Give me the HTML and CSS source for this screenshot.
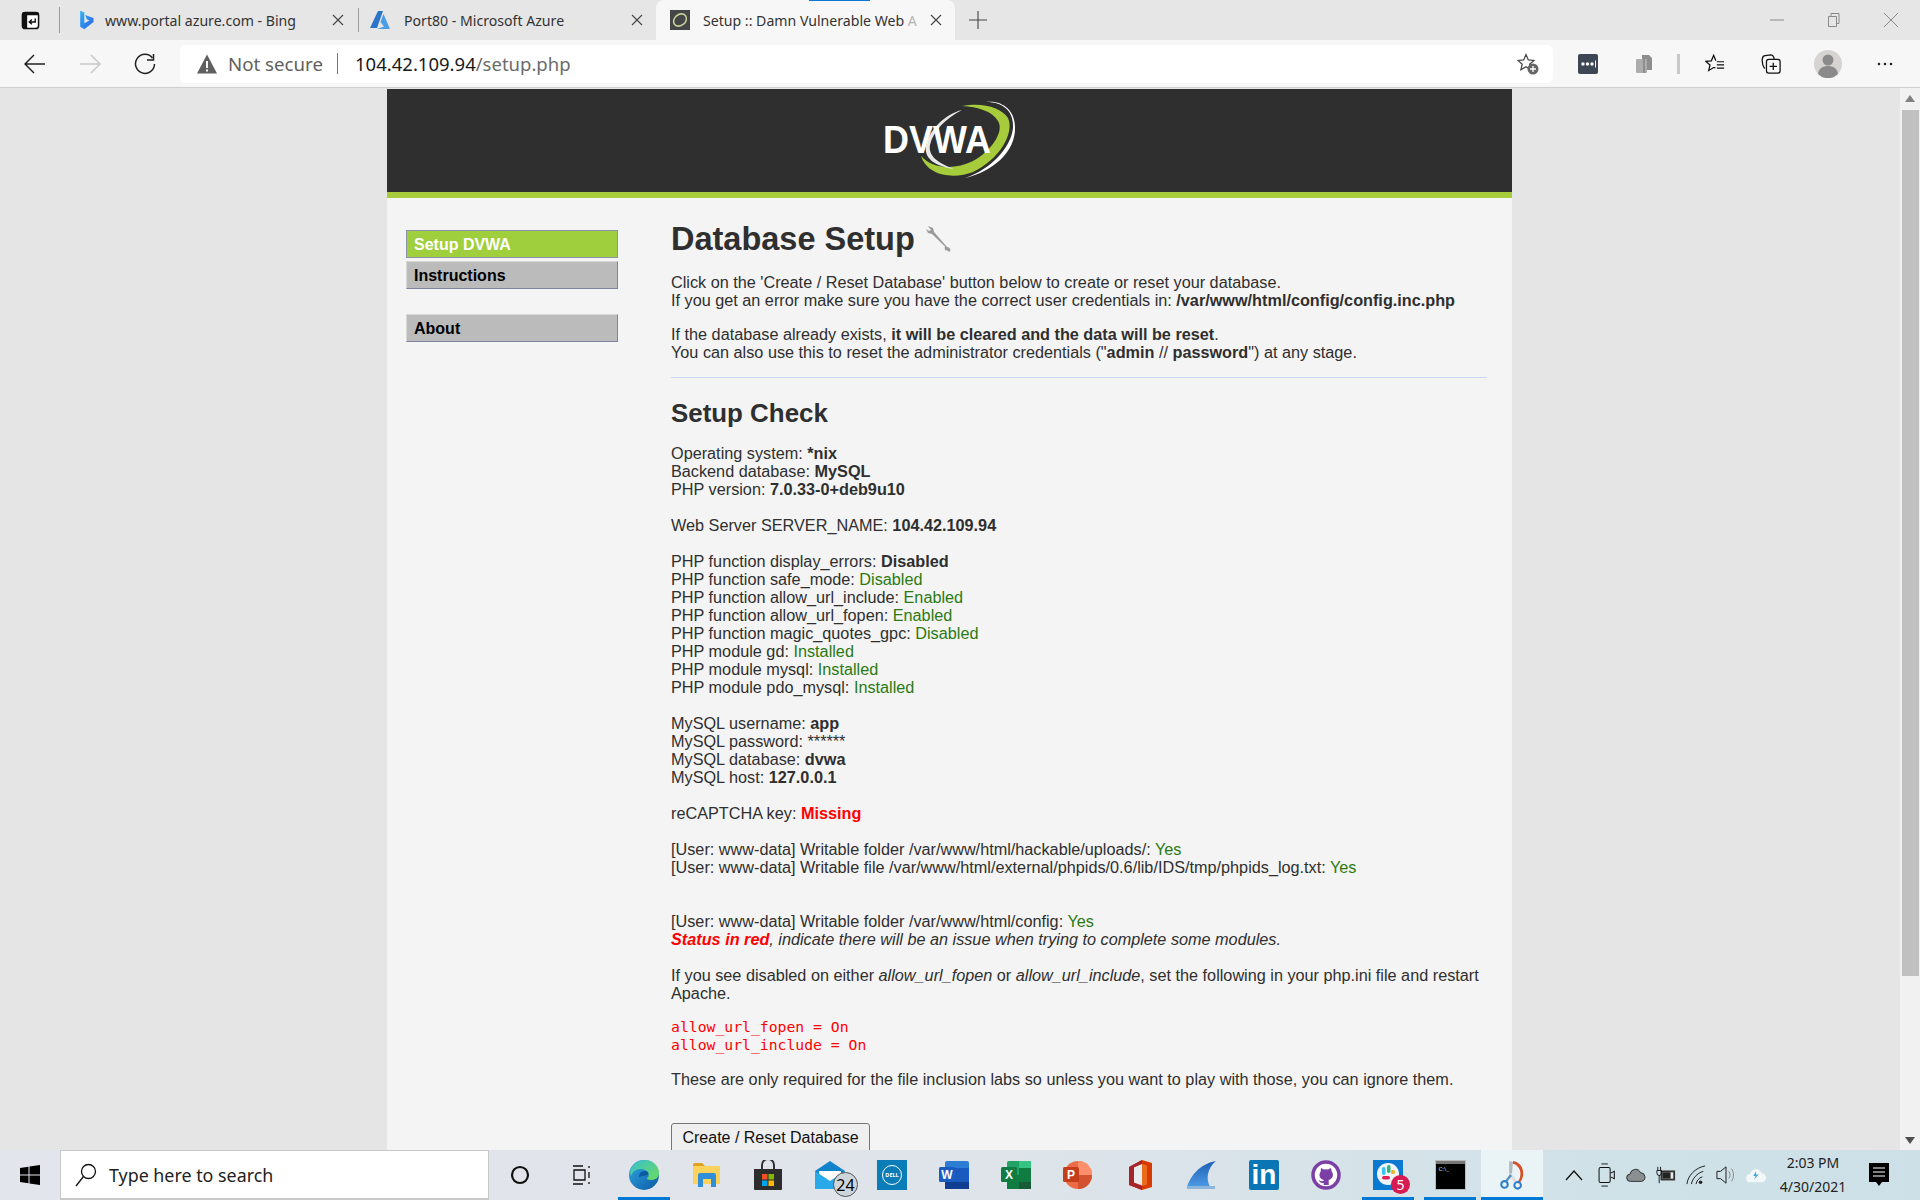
FILE: index.html
```html
<!DOCTYPE html>
<html lang="en">
<head>
<meta charset="utf-8">
<title>Setup :: Damn Vulnerable Web Application</title>
<link rel="stylesheet" href="styles.css">
</head>
<body>
<div class="tabstrip">
  <div class="tab-actions">
    <svg class="ic20" viewBox="0 0 20 20"><rect x="1.5" y="1.5" width="17" height="17" rx="3" fill="#fff" stroke="#111" stroke-width="1.6"/><path d="M1.5 4.5a3 3 0 0 1 3-3h2v17h-2a3 3 0 0 1-3-3z" fill="#111"/><path d="M1.5 1.5h17v3h-17z" fill="#111"/><path d="M15 8v3.5h-6M11.5 9l-2.8 2.5 2.8 2.5" fill="none" stroke="#111" stroke-width="1.5"/></svg>
  </div>
  <div class="tab">
    <svg class="fav" viewBox="0 0 20 24"><defs><linearGradient id="bing" x1="0" y1="0" x2="1" y2="1"><stop offset="0" stop-color="#36b4f0"/><stop offset="1" stop-color="#2a62e8"/></linearGradient></defs><path d="M3 1l5 2v13l6-3.5-3-1.5-2-5 10 3.500v5L8 23l-5-3z" fill="url(#bing)"/></svg>
    <span class="tab-title tab-title-first">www.portal azure.com - Bing</span>
    <svg class="close" viewBox="0 0 12 12"><path d="M1 1l10 10M11 1L1 11"/></svg>
  </div>
  <div class="tab tab-sep">
    <svg class="fav" viewBox="0 0 20 20"><path d="M8 1h5L7 18H0z" fill="#2c74c8"/><path d="M13.500 4L20 19H7l7-2.500-3.500-4.500z" fill="#4a9ce4"/></svg>
    <span class="tab-title">Port80 - Microsoft Azure</span>
    <svg class="close" viewBox="0 0 12 12"><path d="M1 1l10 10M11 1L1 11"/></svg>
  </div>
  <div class="tab tab-active">
    <svg class="fav" viewBox="0 0 20 20"><rect width="20" height="20" fill="#434547"/><ellipse cx="10" cy="10" rx="7" ry="5.500" transform="rotate(-40 10 10)" fill="none" stroke="#c4cf98" stroke-width="1.600"/></svg>
    <span class="tab-title tab-title-active">Setup :: Damn Vulnerable Web <span class="tab-fade">A</span></span>
    <svg class="close" viewBox="0 0 12 12"><path d="M1 1l10 10M11 1L1 11"/></svg>
  </div>
  <svg class="plus" viewBox="0 0 18 18"><path d="M9 0v18M0 9h18"/></svg>
  <div class="win-controls">
    <svg class="win" viewBox="0 0 14 14"><path d="M0 7h14"/></svg>
    <svg class="win" viewBox="0 0 14 14"><path d="M1.500 3.500h8v10h-8zM4 3.500V.5h8v10h-2.500"/></svg>
    <svg class="win" viewBox="0 0 14 14"><path d="M0 0l14 14M14 0L0 14"/></svg>
  </div>
</div>

<div class="toolbar">
  <div class="nav">
    <svg viewBox="0 0 22 22"><path d="M21 11H2M10 2l-9 9 9 9" fill="none" stroke="#222" stroke-width="1.500"/></svg>
  </div>
  <div class="nav">
    <svg viewBox="0 0 22 22"><path d="M1 11h19M12 2l9 9-9 9" fill="none" stroke="#c8c8c8" stroke-width="1.500"/></svg>
  </div>
  <div class="nav">
    <svg viewBox="0 0 22 22"><path d="M18.500 5A9.500 9.500 0 1 0 20.500 11" fill="none" stroke="#222" stroke-width="1.500"/><path d="M13 7h6.500V1" fill="none" stroke="#222" stroke-width="1.500"/></svg>
  </div>
  <div class="address">
    <svg class="warn" viewBox="0 0 20 20"><path d="M10 .5L20 19.500H0z" fill="#5f5f5f"/><path d="M9 7h2v7H9zM9 15.500h2v2H9z" fill="#f7f7f7"/></svg>
    <span class="not-secure">Not secure</span>
    <span class="addr-sep"></span>
    <span class="url"><span class="url-host">104.42.109.94</span>/setup.php</span>
    <svg class="star-add" viewBox="0 0 22 22"><path d="M9 1.500l2.300 5.400 5.700.5-4.400 3.800 1.300 5.600-5-3-5 3 1.300-5.600L1 7.400l5.700-.5z" fill="none" stroke="#444" stroke-width="1.200"/><circle cx="16" cy="16" r="5.500" fill="#666"/><path d="M16 13v6M13 16h6" stroke="#fff" stroke-width="1.300"/></svg>
  </div>
  <div class="tool"><svg viewBox="0 0 20 20"><rect width="20" height="20" rx="2" fill="#3d4654"/><circle cx="5" cy="10" r="1.700" fill="#fff"/><circle cx="9.500" cy="10" r="1.700" fill="#fff"/><circle cx="14" cy="10" r="1.700" fill="#fff"/><path d="M17.500 6.500v7" stroke="#fff"/></svg></div>
  <div class="tool"><svg viewBox="0 0 20 20"><path d="M8 1h7l3 3v12h-5v-5L8 6z" fill="#8e8e8e"/><rect x="2" y="5" width="11" height="14" rx="1" fill="#adadad"/><path d="M10 5v14" stroke="#8e8e8e" stroke-width="2"/></svg></div>
  <span class="tool-sep"></span>
  <div class="tool"><svg viewBox="0 0 22 22"><path d="M12 7.500L9.500 1.500 7 7.500l-6 .6 4.500 4-1.400 6 5.400-3.200h2" fill="none" stroke="#111" stroke-width="1.400"/><path d="M13 8.500h8M13 12h8M13 15.500h8" stroke="#111" stroke-width="1.300"/></svg></div>
  <div class="tool"><svg viewBox="0 0 22 22"><path d="M4 16C2 13 1 8 1.500 5c.2-1.500 1.500-3 3-3.200L11 1c1.500 0 2.500 1 3 2.500l.5 2" fill="none" stroke="#111" stroke-width="1.400"/><rect x="6" y="6" width="15" height="15" rx="2.500" fill="#f7f7f7" stroke="#111" stroke-width="1.400"/><path d="M13.500 9.500v8M9.500 13.500h8" stroke="#111" stroke-width="1.400"/></svg></div>
  <div class="tool"><svg class="avatar" viewBox="0 0 28 28"><circle cx="14" cy="14" r="14" fill="#d6d4d0"/><circle cx="14" cy="10" r="5.500" fill="#8a8a8a"/><path d="M4 24c1-6 5-8 10-8s9 2 10 8a14 14 0 0 1-20 0z" fill="#8a8a8a"/></svg></div>
  <div class="tool"><svg class="dots" viewBox="0 0 16 4"><circle cx="2" cy="2" r="1.300" fill="#222"/><circle cx="8" cy="2" r="1.300" fill="#222"/><circle cx="14" cy="2" r="1.300" fill="#222"/></svg></div>
</div>

<div class="viewport">
  <div class="page">
    <div class="wrapper">
      <header class="site-header">
        <svg class="logo" viewBox="0 0 160 100">
          <path d="M116 12C134 12 144 22 143 38C141 57 122 79 95 88C122 82 146 62 145 37C145 21 133 10 116 12Z" fill="#fff"/>
          <path d="M92 16C112 12 131 17 138 28C145 43 129 70 103 82C85 89 58 87 51 66C62 79 85 80 103 71C120 62 135 42 128 31C122 21 108 17 92 16Z" fill="#a6cc3c"/>
          <path d="M92 20C76 24 60 38 56 56C54 68 64 76 84 79C68 73 58 66 60 55C63 41 76 28 92 20Z" fill="#e8e8e8"/>
          <text class="logo-text" x="13" y="63" textLength="108" lengthAdjust="spacingAndGlyphs">DVWA</text>
        </svg>
      </header>
      <div class="content">
        <nav class="sidebar">
          <ul class="menu">
            <li class="menu-item menu-item-active">Setup DVWA</li>
            <li class="menu-item">Instructions</li>
          </ul>
          <ul class="menu">
            <li class="menu-item">About</li>
          </ul>
        </nav>
        <main class="main">
          <h1 class="title">Database Setup
            <svg class="wrench" viewBox="0 0 26 28"><path d="M2 1l5 2 1 4 13 15c1.500 0 3 1 3.500 3l-1 2-3-2-1 .5c-1-1.500-1-3-.5-4L6 9 2 8 0 4l3 2 2-1z" fill="#9a9a9a"/></svg>
          </h1>
          <p>Click on the 'Create / Reset Database' button below to create or reset your database.<br>If you get an error make sure you have the correct user credentials in: <b>/var/www/html/config/config.inc.php</b></p>
          <p>If the database already exists, <b>it will be cleared and the data will be reset</b>.<br>You can also use this to reset the administrator credentials ("<b>admin</b> // <b>password</b>") at any stage.</p>
          <hr class="rule">
          <h2 class="subtitle">Setup Check</h2>
          <div class="checks">
            Operating system: <b>*nix</b><br>
            Backend database: <b>MySQL</b><br>
            PHP version: <b>7.0.33-0+deb9u10</b><br><br>
            Web Server SERVER_NAME: <b>104.42.109.94</b><br><br>
            PHP function display_errors: <b>Disabled</b><br>
            PHP function safe_mode: <span class="ok">Disabled</span><br>
            PHP function allow_url_include: <span class="ok">Enabled</span><br>
            PHP function allow_url_fopen: <span class="ok">Enabled</span><br>
            PHP function magic_quotes_gpc: <span class="ok">Disabled</span><br>
            PHP module gd: <span class="ok">Installed</span><br>
            PHP module mysql: <span class="ok">Installed</span><br>
            PHP module pdo_mysql: <span class="ok">Installed</span><br><br>
            MySQL username: <b>app</b><br>
            MySQL password: ******<br>
            MySQL database: <b>dvwa</b><br>
            MySQL host: <b>127.0.0.1</b><br><br>
            reCAPTCHA key: <b class="bad">Missing</b><br><br>
            [User: www-data] Writable folder /var/www/html/hackable/uploads/: <span class="ok">Yes</span><br>
            [User: www-data] Writable file /var/www/html/external/phpids/0.6/lib/IDS/tmp/phpids_log.txt: <span class="ok">Yes</span><br><br><br>
            [User: www-data] Writable folder /var/www/html/config: <span class="ok">Yes</span><br>
            <i><b class="bad">Status in red</b>, indicate there will be an issue when trying to complete some modules.</i><br><br>
            If you see disabled on either <i>allow_url_fopen</i> or <i>allow_url_include</i>, set the following in your php.ini file and restart Apache.
          </div>
          <pre class="code">allow_url_fopen = On
allow_url_include = On</pre>
          <p class="note">These are only required for the file inclusion labs so unless you want to play with those, you can ignore them.</p>
          <button class="submit" type="button">Create / Reset Database</button>
        </main>
      </div>
    </div>
  </div>
  <div class="scrollbar">
    <span class="arrow-up"></span>
    <span class="thumb"></span>
    <span class="arrow-down"></span>
  </div>
</div>

<div class="taskbar">
  <div class="start"><svg viewBox="0 0 20 20"><path d="M0 3l8.500-1.200v7.700H0zM9.500 1.600L20 0v9.500H9.500zM0 10.500h8.500v7.700L0 17zM9.500 10.500H20V20L9.500 18.400z" fill="#000"/></svg></div>
  <div class="search">
    <svg class="search-ic" viewBox="0 0 22 24"><circle cx="13.500" cy="8.500" r="7" fill="none" stroke="#111" stroke-width="1.300"/><path d="M8.500 13.500L1 23" stroke="#111" stroke-width="1.300"/></svg>
    <span class="search-text">Type here to search</span>
  </div>
  <div class="slot"><svg class="i20" viewBox="0 0 20 20"><circle cx="10" cy="10" r="8" fill="none" stroke="#111" stroke-width="2.200"/></svg></div>
  <div class="slot"><svg class="i20" viewBox="0 0 20 20"><path d="M1 1h10M1 19h10M2 5h11v10H2zM17 1v2M17 7v6M17 17v2" fill="none" stroke="#111" stroke-width="1.300"/></svg></div>
  <div class="slot slot-on">
    <svg class="i30" viewBox="0 0 30 30"><defs><linearGradient id="edge1" x1="0" y1="0" x2="1" y2="1"><stop offset="0" stop-color="#2fa8e0"/><stop offset="1" stop-color="#0c59a4"/></linearGradient><linearGradient id="edge2" x1="0" y1="0" x2="1" y2="1"><stop offset="0" stop-color="#36c1d0"/><stop offset="1" stop-color="#6fdb5c"/></linearGradient></defs><circle cx="15" cy="15" r="15" fill="url(#edge1)"/><path d="M2 9C5 3 10 0 16 0c8 0 14 6 14 13 0 5-4 7-8 7-3 0-4-1-4-2 2-1 2-3 1-5-2-4-8-5-12-3-2 1-4 3-5 6-1-3-1-5 0-7z" fill="url(#edge2)"/><path d="M10 17c0-4 3-6 6-6 3 0 4 2 3 4-1 0-9 2-9 2z" fill="#0c59a4"/></svg>
  </div>
  <div class="slot">
    <svg class="i30" viewBox="0 0 30 30"><path d="M2 5a2 2 0 0 1 2-2h7l3 3H2z" fill="#e0a11e"/><rect x="2" y="6" width="27" height="18" fill="#fbd35c"/><path d="M7 27V15a2 2 0 0 1 2-2h14a2 2 0 0 1 2 2v12h-5v-8h-8v8z" fill="#2f8fd8"/></svg>
  </div>
  <div class="slot">
    <svg class="i30" viewBox="0 0 30 30"><path d="M9 9V5a6 6 0 0 1 12 0v4" fill="none" stroke="#333" stroke-width="2"/><path d="M1 9h28v20a1 1 0 0 1-1 1H2a1 1 0 0 1-1-1z" fill="#2d2d2d"/><rect x="9" y="14" width="5.500" height="5.500" fill="#f25022"/><rect x="15.500" y="14" width="5.500" height="5.500" fill="#7fba00"/><rect x="9" y="20.500" width="5.500" height="5.500" fill="#00a4ef"/><rect x="15.500" y="20.500" width="5.500" height="5.500" fill="#ffb900"/></svg>
  </div>
  <div class="slot slot-badged">
    <svg class="i30" viewBox="0 0 30 30"><path d="M0 11L15 1l15 10v18H0z" fill="#1083cc"/><path d="M4 11h22v7l-11 7-11-7z" fill="#fff"/><path d="M0 11l15 10 15-10v18H0z" fill="#29a8ea"/></svg>
    <span class="badge badge-gray">24</span>
  </div>
  <div class="slot"><div class="dell"><span class="dell-ring">DELL</span></div></div>
  <div class="slot"><svg class="i30" viewBox="0 0 30 30"><rect x="6" y="1" width="24" height="28" rx="2" fill="#2b7cd3"/><rect x="6" y="8" width="24" height="7" fill="#185abd"/><rect x="6" y="15" width="24" height="7" fill="#185abd"/><rect x="6" y="22" width="24" height="7" fill="#103f91"/><rect y="7" width="16" height="15" rx="1.500" fill="#1a5cc0"/><text class="tile-letter" x="8" y="19">W</text></svg></div>
  <div class="slot"><svg class="i30" viewBox="0 0 30 30"><rect x="6" y="1" width="24" height="28" rx="2" fill="#21a366"/><rect x="18" y="1" width="12" height="7" fill="#33c481"/><rect x="6" y="8" width="12" height="7" fill="#21a366"/><rect x="18" y="8" width="12" height="14" fill="#107c41"/><rect x="6" y="15" width="12" height="14" fill="#107c41"/><rect x="18" y="22" width="12" height="7" fill="#185c37"/><rect y="7" width="16" height="15" rx="1.500" fill="#107c41"/><text class="tile-letter" x="8" y="19">X</text></svg></div>
  <div class="slot"><svg class="i30" viewBox="0 0 30 30"><circle cx="15" cy="15" r="14" fill="#ed6c47"/><path d="M15 1a14 14 0 0 1 14 14H15z" fill="#ff8f6b"/><path d="M15 15h14a14 14 0 0 1-14 14z" fill="#d35230"/><rect y="7" width="16" height="15" rx="1.500" fill="#c43e1c"/><text class="tile-letter" x="8" y="19">P</text></svg></div>
  <div class="slot"><svg class="i30-narrow" viewBox="0 0 24 30"><path d="M14 0L24 3v24l-10 3L1 25V7z" fill="#d83b01"/><path d="M14 0v4L6 7.500v15l8 3V30L1 25V7z" fill="#a4262c"/><path d="M14 4L6 7.500v15l8 3z" fill="#e6ecee"/><path d="M14 4l5 1.500v19L14 26z" fill="#eb6c1c"/></svg></div>
  <div class="slot"><svg class="i30" viewBox="0 0 30 30"><defs><linearGradient id="shark" x1="0" y1="0" x2="0" y2="1"><stop offset="0" stop-color="#1c5fb4"/><stop offset="1" stop-color="#4d9be6"/></linearGradient></defs><path d="M29 1c-4 3-7 8-8 13-1 4 0 9 2 13H0C3 17 12 4 29 1z" fill="url(#shark)"/><rect y="26" width="28" height="3" fill="#8cb6de"/></svg></div>
  <div class="slot"><div class="linkedin">in</div></div>
  <div class="slot"><svg class="i30" viewBox="0 0 30 30"><circle cx="15" cy="15" r="13" fill="#fff" stroke="#7b3fa6" stroke-width="3.500"/><path d="M10 8l3 1.500a8 8 0 0 1 4 0L20 8l.7 3.500c2 2.500 1.500 6-1 7.500-1 .6-1.700.8-2 1v5h-5v-2c-3 .5-4-1-5-3 1 .5 2 1.500 5 1v-1c-4-1-5.500-5-3-8.500z" fill="#7b3fa6"/></svg></div>
  <div class="slot slot-on slot-badged">
    <svg class="i30" viewBox="0 0 30 30"><rect width="30" height="30" fill="#0a79d1"/><circle cx="15" cy="14" r="11" fill="#f1f4f6"/><rect x="9" y="7" width="3.500" height="8" rx="1.700" fill="#36c5f0"/><rect x="14" y="5" width="3.500" height="8" rx="1.700" fill="#2eb67d"/><rect x="9" y="16" width="8" height="3.500" rx="1.700" fill="#e01e5a"/><rect x="18" y="10" width="4" height="4" rx="1.500" fill="#ecb22e"/></svg>
    <span class="badge badge-red">5</span>
  </div>
  <div class="slot slot-on"><div class="terminal"><span class="terminal-text">C:\_</span></div></div>
  <div class="slot slot-on slot-active">
    <svg class="i30" viewBox="0 0 26 32"><path d="M14 1c7 1 11 7 11 13 0 5-2 9-5 11l-1-2c2-2 3-5 3-9 0-4-3-9-8-10z" fill="#d4522a"/><path d="M10 1l4 1-1 12-3 1z" fill="#b0b8c0"/><path d="M12 14l6 8-3 1-5-7z" fill="#d8dde2"/><path d="M11 15L5 23l2 1 6-7z" fill="#5a8fc0"/><circle cx="5" cy="26" r="3.500" fill="none" stroke="#2f7fc8" stroke-width="2.200"/><circle cx="19" cy="27" r="3.500" fill="none" stroke="#2f7fc8" stroke-width="2.200"/></svg>
  </div>
  <div class="tray">
    <svg class="tr tr-chev" viewBox="0 0 18 12"><path d="M1 11L9 2l8 9" fill="none" stroke="#111" stroke-width="1.300"/></svg>
    <svg class="tr" viewBox="0 0 20 26"><path d="M4 5h9a1.500 1.500 0 0 1 1.500 1.500v13A1.500 1.500 0 0 1 13 21H4a1.500 1.500 0 0 1-1.500-1.500v-13A1.500 1.500 0 0 1 4 5z" fill="none" stroke="#111" stroke-width="1.100"/><path d="M15 11l4-2v8l-4-2" fill="none" stroke="#111" stroke-width="1.100"/><path d="M5 1h7M5 25h7" stroke="#111"/></svg>
    <svg class="tr" viewBox="0 0 22 18"><path d="M5 16a4 4 0 0 1-.5-8A6 6 0 0 1 16 6.500a4.800 4.800 0 0 1 1 9.500z" fill="#8a8f92" stroke="#222"/></svg>
    <svg class="tr" viewBox="0 0 22 20"><rect x="5" y="5" width="16" height="11" fill="#333"/><rect x="7" y="7" width="12" height="7" fill="#e4e8ea"/><rect x="7" y="7" width="9" height="7" fill="#222"/><path d="M2 1v4M5 1v4M1 5h5v3a2.500 2.500 0 0 1-5 0zM3.500 10v9" stroke="#111" fill="none"/></svg>
    <svg class="tr" viewBox="0 0 22 22"><path d="M1 21C2 12 10 3 21 1M6 21c1-6 6-12 13-14M11 21c.5-3 3-7 7-8" fill="none" stroke="#222" stroke-width="1.100"/><circle cx="16" cy="19" r="2" fill="#222"/></svg>
    <svg class="tr" viewBox="0 0 22 22"><path d="M1 7h4l6-5v18l-6-5H1z" fill="none" stroke="#222" stroke-width="1.100"/><path d="M14 7c2 2 2 6 0 8M17 4c3 4 3 10 0 14" fill="none" stroke="#888" stroke-width="1.100"/></svg>
    <svg class="tr" viewBox="0 0 22 18"><path d="M5 17a4.500 4.500 0 0 1-.5-9A6.500 6.500 0 0 1 17 7a5 5 0 0 1 0 10z" fill="#f2f8fa"/><path d="M11 5l-3 5h2.500L9 14l5-5.500h-3z" fill="#4aa6dc"/></svg>
    <div class="clock"><span>2:03 PM</span><span>4/30/2021</span></div>
    <svg class="notif" viewBox="0 0 20 26"><path d="M0 1h20v19h-7l-3 4-3-4H0z" fill="#000"/><path d="M4 6h12M4 10h12M4 14h12" stroke="#fff" stroke-width="1.200"/></svg>
  </div>
</div>
</body>
</html>
```

FILE: styles.css
```css
* { box-sizing: border-box; }
html, body { height: 100%; }
body {
  margin: 0;
  height: 1200px;
  display: flex;
  flex-direction: column;
  overflow: hidden;
  font-family: "Liberation Sans", Arial, sans-serif;
  background: #e5e5e5;
}

/* Browser tab strip */
.tabstrip {
  height: 40px;
  flex: none;
  display: flex;
  align-items: center;
  background: #e6e6e6;
  font-family: "Noto Sans", sans-serif;
}
.tab-actions {
  width: 60px;
  height: 26px;
  display: flex;
  align-items: center;
  padding-left: 21px;
  border-right: 1px solid #9c9c9c;
  flex: none;
}
.ic20 { width: 19px; height: 19px; }
.tab {
  width: 298px;
  height: 40px;
  flex: none;
  display: flex;
  align-items: center;
  padding: 0 14px 0 16px;
  position: relative;
}
.tab-sep::before {
  content: "";
  position: absolute;
  left: 0;
  top: 8px;
  height: 24px;
  width: 1px;
  background: #9c9c9c;
}
.tab-sep { padding-left: 12px; padding-right: 13px; }
.tab-active {
  background: #f7f7f7;
  border-radius: 8px 8px 0 0;
  width: 299px;
  padding-left: 14px;
  padding-right: 13px;
}
.tab-active::before {
  content: "";
  position: absolute;
  left: 153px;
  top: 0;
  width: 61px;
  height: 1px;
  background: #0a78d4;
}
.fav { width: 20px; height: 20px; flex: none; }
.tab-title {
  flex: 1;
  margin-left: 14px;
  font-size: 14.120px;
  color: #333;
  white-space: nowrap;
}
.tab-title-first { margin-left: 9px; }
.tab-title-active { margin-left: 13px; }
.tab-fade { color: #b5b5b5; }
.close { width: 12px; height: 12px; flex: none; fill: none; stroke: #444; stroke-width: 1.100; }
.plus { width: 18px; height: 18px; margin-left: 14px; fill: none; stroke: #444; stroke-width: 1.100; flex: none; }
.win-controls {
  margin-left: auto;
  display: flex;
  align-items: center;
  gap: 43px;
  padding-right: 22px;
}
.win { width: 14px; height: 14px; fill: none; stroke: #8a8a8a; stroke-width: 1; }

/* Browser toolbar */
.toolbar {
  height: 48px;
  flex: none;
  display: flex;
  align-items: center;
  padding: 0 9px 0 7px;
  background: #f7f7f7;
  border-bottom: 1px solid #cfcfcf;
  font-family: "Noto Sans", sans-serif;
}
.nav { width: 55px; display: flex; justify-content: center; flex: none; }
.nav svg { width: 22px; height: 22px; }
.address {
  width: 1373px;
  height: 38px;
  margin: 0 7px 0 8px;
  flex: none;
  display: flex;
  align-items: center;
  background: #fff;
  border-radius: 6px;
  padding: 0 14px 0 17px;
}
.warn { width: 20px; height: 20px; flex: none; }
.not-secure { margin-left: 11px; font-size: 18.700px; color: #5f5f5f; }
.addr-sep { width: 1px; height: 21px; background: #777; margin: 0 17px 0 14px; }
.url { font-size: 18.500px; color: #6b6b6b; }
.url-host { color: #1a1a1a; }
.star-add { width: 22px; height: 22px; margin-left: auto; }
.tool { width: 56px; display: flex; justify-content: center; flex: none; }
.tool svg { width: 20px; height: 20px; }
.tool .avatar { width: 28px; height: 28px; margin-left: 1px; }
.tool .dots { width: 16px; height: 4px; margin-left: 4px; }
.tool-sep { width: 3px; height: 20px; background: #c8c8c8; margin: 0 7px 0 5px; flex: none; }

/* Page area */
.viewport { flex: 1; min-height: 0; display: flex; overflow: hidden; }
.page {
  flex: 1;
  min-width: 0;
  overflow: hidden;
  padding: 1px 1px 0 0;
  background: #e5e5e5;
}
.wrapper { width: 1125px; margin: 0 auto; background: #f4f4f4; min-height: 100%; }
.site-header {
  height: 109px;
  background: #2f2f2f;
  border-bottom: 6px solid #a6cc3c;
  display: flex;
  justify-content: center;
}
.logo { width: 160px; height: 100px; margin-top: 1px; }
.logo-text { font: bold 39px "Liberation Sans", Arial, sans-serif; fill: #fff; }
.content { display: flex; }
.sidebar { width: 284px; flex: none; padding: 32px 0 0 19px; }
.menu { list-style: none; margin: 0 0 25px; padding: 0; width: 212px; }
.menu-item {
  height: 28px;
  line-height: 28px;
  margin-bottom: 3px;
  padding-left: 7px;
  font-size: 16px;
  font-weight: bold;
  color: #000;
  background: #bbb;
  border: 1px solid;
  border-color: #d8d8d8 #7e84a0 #7e84a0 #d8d8d8;
}
.menu-item-active { background: #a0cf3e; color: #fff; border-color: #8a93ac; }
.menu .menu-item:last-child { margin-bottom: 0; }
.main {
  width: 816px;
  flex: none;
  padding-top: 22px;
  font-size: 16.240px;
  line-height: 18px;
  color: #2f2f2f;
}
.title { margin: 0 0 15px; font-size: 32.500px; line-height: 38px; color: #2f2f2f; }
.wrench { width: 26px; height: 28px; vertical-align: -3px; margin-left: 2px; }
.main p { margin: 0 0 16px; }
.rule { margin: 15px 0 0; border: 0; border-top: 1px solid #c8d8f0; }
.subtitle { margin: 20px 0 16px; font-size: 25.900px; line-height: 30px; color: #2f2f2f; }
.ok { color: #2c7a12; }
.bad { color: #f00; }
.code {
  margin: 16px 0;
  font: 14.750px/18px "DejaVu Sans Mono", monospace;
  color: #f00;
}
.main .note { margin: 0 0 35px; }
.submit {
  display: block;
  height: 30px;
  width: 199px;
  padding: 0;
  font: 16px "Liberation Sans", Arial, sans-serif;
  color: #111;
  background: #efefef;
  border: 1px solid #767676;
  border-radius: 3px;
}

/* Scrollbar */
.scrollbar {
  width: 20px;
  flex: none;
  display: flex;
  flex-direction: column;
  align-items: center;
  background: #f1f1f1;
  padding-top: 7px;
}
.arrow-up, .arrow-down { width: 0; height: 0; border: 5px solid transparent; flex: none; }
.arrow-up { border-top: 0; border-bottom: 7px solid #808080; }
.arrow-down { border-bottom: 0; border-top: 7px solid #505050; margin-top: auto; margin-bottom: 6px; }
.thumb { width: 17px; height: 866px; margin-top: 8px; background: #c0c0c0; flex: none; }

/* Windows taskbar */
.taskbar {
  height: 50px;
  flex: none;
  display: flex;
  align-items: stretch;
  background: linear-gradient(90deg, #e3e5ec 0%, #dfe4ea 50%, #cfe2e8 85%, #cee0e7 100%);
  font-family: "Noto Sans", sans-serif;
  color: #111;
}
.start { width: 60px; flex: none; display: flex; align-items: center; justify-content: center; }
.start svg { width: 20px; height: 20px; }
.search {
  width: 429px;
  flex: none;
  display: flex;
  align-items: center;
  padding-left: 14px;
  background: #fff;
  border: 1px solid #c8c8c8;
  border-bottom-width: 2px;
}
.search-ic { width: 22px; height: 24px; flex: none; }
.search-text { margin-left: 12px; font-size: 17.850px; color: #222; }
.slot {
  width: 62px;
  flex: none;
  display: flex;
  align-items: center;
  justify-content: center;
  position: relative;
}
.slot-on::after {
  content: "";
  position: absolute;
  left: 5px;
  right: 5px;
  bottom: 0;
  height: 3px;
  background: #0078d4;
}
.slot-active { background: #eaf3f6; }
.slot-active::after { left: 0; right: 0; }
.i20 { width: 20px; height: 20px; }
.i30 { width: 30px; height: 30px; }
.i30-narrow { width: 24px; height: 30px; }
.tile-letter { font: bold 12px "Liberation Sans", Arial, sans-serif; fill: #fff; text-anchor: middle; }
.badge {
  position: absolute;
  border-radius: 50%;
  display: flex;
  align-items: center;
  justify-content: center;
}
.badge-gray {
  right: 3px;
  bottom: 3px;
  width: 25px;
  height: 25px;
  font-size: 16px;
  color: #000;
  background: #cdd6da;
  border: 1px solid #555;
}
.badge-red {
  right: 9px;
  bottom: 6px;
  width: 19px;
  height: 19px;
  font-size: 14px;
  color: #fff;
  background: #d61b52;
}
.dell { width: 30px; height: 30px; background: #0a7cb8; display: flex; align-items: center; justify-content: center; }
.dell-ring {
  width: 20px;
  height: 20px;
  border: 1.500px solid #fff;
  border-radius: 50%;
  color: #fff;
  font-size: 5.500px;
  font-weight: bold;
  display: flex;
  align-items: center;
  justify-content: center;
}
.linkedin {
  width: 30px;
  height: 30px;
  border-radius: 2px;
  background: #0a75b5;
  color: #fff;
  font: bold 28px/30px "Liberation Sans", Arial, sans-serif;
  text-align: center;
}
.terminal { width: 29px; height: 28px; background: #000; border-top: 3px solid #777; box-shadow: 0 0 0 1px #bbb; }
.terminal-text { display: block; font-size: 6px; line-height: 10px; padding-left: 3px; color: #ddd; }
.tray { flex: 1; min-width: 0; display: flex; align-items: center; padding-left: 22px; }
.tr { width: 20px; height: 24px; flex: none; margin-right: 10px; }
.tr-chev { width: 18px; height: 12px; margin-right: 13px; }
.clock {
  width: 80px;
  margin-left: -3px;
  display: flex;
  flex-direction: column;
  align-items: center;
  gap: 6px;
  font-size: 14px;
  line-height: 18px;
  color: #222;
}
.notif { width: 20px; height: 26px; margin-left: 16px; flex: none; }
```
